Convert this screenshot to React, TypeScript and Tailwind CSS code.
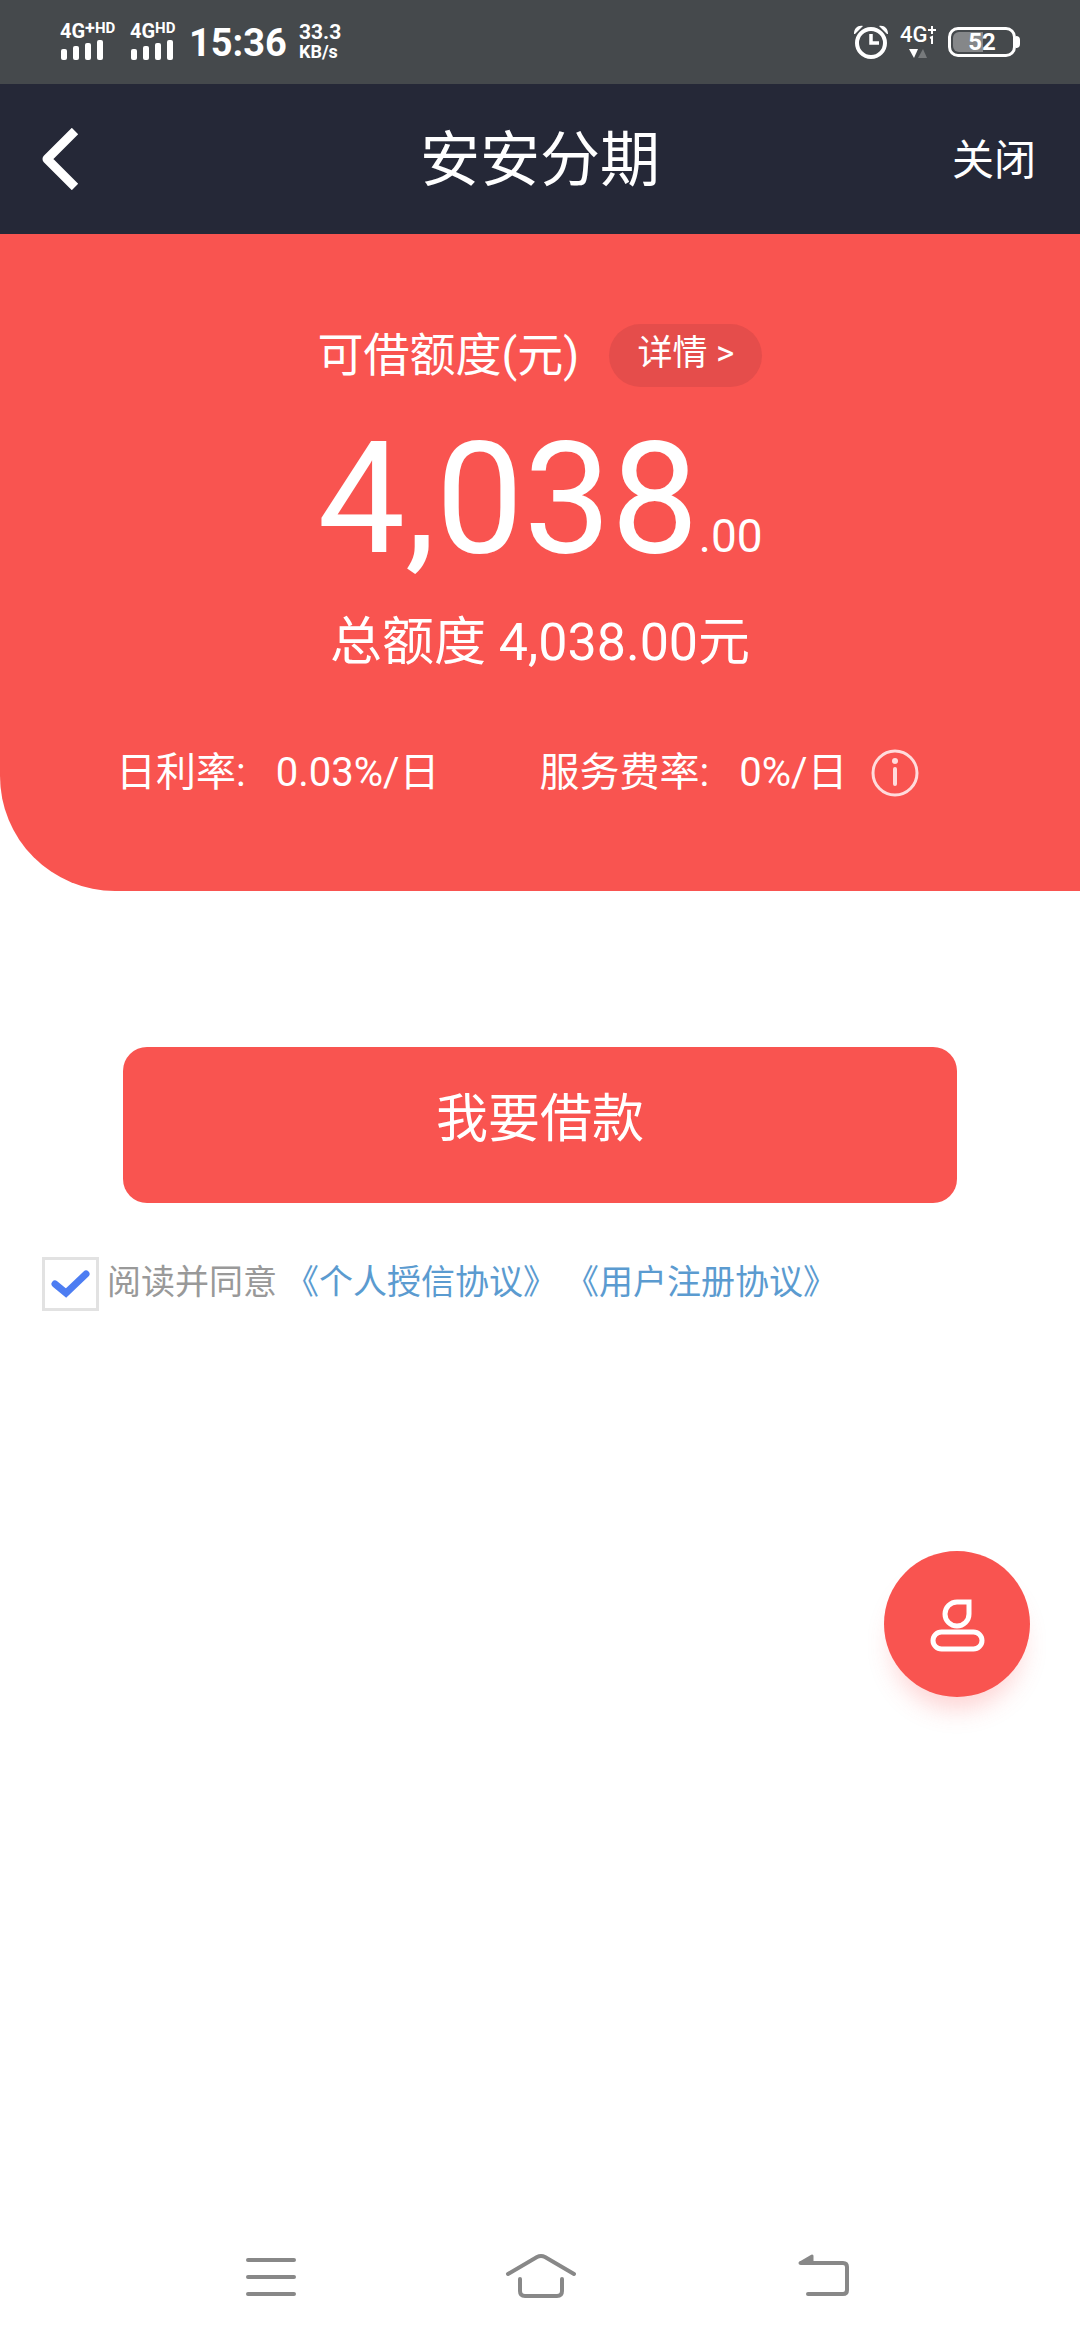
import { useState } from 'react';

interface SignalProps {
  network: string;
  plus?: boolean;
}

interface RateProps {
  label: string;
  value: string;
}

const AGREEMENTS = ['《个人授信协议》', '《用户注册协议》'];

function Signal({ network, plus }: SignalProps) {
  return (
    <div className="flex flex-col">
      <div className="flex items-start font-bold">
        <span className="text-[20px] leading-[18px]">{network}</span>
        {plus && <span className="text-[18px] leading-[12px]">+</span>}
        <span className="text-[15px] leading-[12px]">HD</span>
      </div>
      <svg className="w-11 h-5" viewBox="0 0 44 20" fill="currentColor">
        <rect x="1" y="9" width="6" height="11" rx="2" />
        <rect x="13" y="6" width="6" height="14" rx="2" />
        <rect x="25" y="3" width="6" height="17" rx="2" />
        <rect x="37" y="0" width="6" height="20" rx="2" />
      </svg>
    </div>
  );
}

function AlarmIcon() {
  return (
    <svg className="w-[34px] h-[34px]" viewBox="0 0 34 34" fill="none" stroke="currentColor">
      <circle cx="17" cy="18" r="14" strokeWidth="4" />
      <path d="M17 9v9h8" strokeWidth="3.5" />
      <path d="M0 9C0 3 4 0 9 1L1 9zM34 9c0-6-4-9-9-8l8 8z" fill="currentColor" stroke="none" />
    </svg>
  );
}

function StatusBar() {
  return (
    <header className="flex items-start justify-between h-[84px] pt-[22px] px-[60px] bg-[#45494c] text-white">
      <div className="flex items-start">
        <div className="w-[70px]">
          <Signal network="4G" plus />
        </div>
        <div className="w-[59px]">
          <Signal network="4G" />
        </div>
        <span className="w-[110px] text-[38px] leading-[42px] font-bold">15:36</span>
        <div className="flex flex-col font-bold">
          <span className="text-[21px] leading-[20px]">33.3</span>
          <span className="text-[18px] leading-[20px]">KB/s</span>
        </div>
      </div>
      <div className="flex items-start gap-3 pt-[3px]">
        <AlarmIcon />
        <div className="flex flex-col w-9">
          <div className="flex items-start">
            <span className="text-[22px] leading-[20px] font-medium">4G</span>
            <svg className="w-2 h-5" viewBox="0 0 8 20" fill="none" stroke="currentColor" strokeWidth="2">
              <path d="M4 1v8M0 5h8M2 13l2-1v7" />
            </svg>
          </div>
          <svg className="w-9 h-[14px]" viewBox="0 0 36 14">
            <path d="M9 4h9l-4 9z" fill="#fff" />
            <path d="M18 13h9l-4-9z" fill="#777a7c" />
          </svg>
        </div>
        <div className="flex items-center pt-[2px]">
          <div className="relative w-[68px] h-[30px] border-3 border-white rounded-[10px]">
            <div className="absolute left-[2px] top-[2px] w-[30px] h-5 rounded-l-[6px] bg-[#858789]" />
            <span className="relative block text-center text-[24px] leading-6 font-bold">52</span>
          </div>
          <div className="w-1 h-3 rounded-r-full bg-white" />
        </div>
      </div>
    </header>
  );
}

function TitleBar() {
  return (
    <nav className="grid grid-cols-3 items-center h-[150px] px-[42px] bg-[#252837] text-white">
      <button aria-label="返回" className="justify-self-start">
        <svg className="w-[38px] h-[62px]" viewBox="0 0 38 62" fill="none" stroke="currentColor" strokeWidth="9" strokeLinejoin="round">
          <path d="M33 3L5 31l28 28" />
        </svg>
      </button>
      <h1 className="pt-1 text-center text-[60px] leading-[72px] whitespace-nowrap">安安分期</h1>
      <button className="justify-self-end pt-1 pr-[2px] text-[42px] leading-[50px]">关闭</button>
    </nav>
  );
}

function Rate({ label, value }: RateProps) {
  return (
    <div className="flex gap-[30px]">
      <span>{label}</span>
      <span>{value}</span>
    </div>
  );
}

function Hero() {
  return (
    <section className="flex flex-col items-center h-[657px] pt-[90px] rounded-bl-[115px] bg-[#f95450] text-white">
      <div className="flex items-center gap-[30px]">
        <span className="text-[46px] leading-[63px]">可借额度(元)</span>
        <button className="h-[63px] px-7 pb-1 rounded-full bg-[#e54d4b] text-[35px] leading-[60px]">详情 &gt;</button>
      </div>
      <p className="mt-[34px] flex items-baseline">
        <span className="text-[156px] leading-[156px]">4,038</span>
        <span className="text-[46px] leading-[60px]">.00</span>
      </p>
      <p className="mt-[26px] text-[52px] leading-[80px]">总额度 4,038.00元</p>
      <div className="flex items-center self-stretch mt-[60px] pl-[116px] text-[40px] leading-[60px]">
        <Rate label="日利率:" value="0.03%/日" />
        <div className="flex items-center gap-6 ml-[100px]">
          <Rate label="服务费率:" value="0%/日" />
          <button aria-label="费率说明">
            <svg className="w-[48px] h-[48px]" viewBox="0 0 48 48" fill="none" stroke="#ffdcdc" strokeWidth="3">
              <circle cx="24" cy="24" r="22" />
              <path d="M24 20v15" strokeWidth="4" strokeLinecap="round" />
              <circle cx="24" cy="12" r="3" fill="#ffdcdc" stroke="none" />
            </svg>
          </button>
        </div>
      </div>
    </section>
  );
}

function SystemNav() {
  return (
    <footer className="flex items-center justify-between h-[126px] mt-auto px-[230px] text-[#888]">
      <button aria-label="最近任务">
        <svg className="w-20 h-14" viewBox="0 0 80 56" fill="none" stroke="currentColor" strokeWidth="4" strokeLinecap="round">
          <path d="M18 11h46M18 28h46M18 45h46" />
        </svg>
      </button>
      <button aria-label="主屏幕">
        <svg className="w-20 h-14" viewBox="0 0 80 56" fill="none" stroke="currentColor" strokeWidth="4" strokeLinecap="round">
          <path d="M8 25L37 8q4-2 8 0l29 17M20 30v12q0 5 5 5h32q5 0 5-5V30" />
        </svg>
      </button>
      <button aria-label="返回上一页">
        <svg className="w-20 h-14" viewBox="0 0 80 56" fill="none" stroke="currentColor" strokeWidth="4" strokeLinecap="round">
          <path d="M31 14h42q4 0 4 4v23q0 4-4 4H38" />
          <path d="M30 14l12-7v7z" strokeWidth="3" fill="currentColor" strokeLinejoin="round" />
        </svg>
      </button>
    </footer>
  );
}

export default function App() {
  const [agreed, setAgreed] = useState(true);

  return (
    <div className="relative flex flex-col min-h-screen bg-white font-['Roboto','Noto_Sans_CJK_SC',sans-serif]">
      <StatusBar />
      <TitleBar />
      <Hero />
      <main>
        <div className="px-[123px] pt-[156px]">
          <button className="w-full h-[156px] pb-[10px] rounded-[24px] bg-[#f95450] text-white text-[52px]">我要借款</button>
        </div>
        <div className="flex items-center mt-[54px] pl-[42px] text-[34px] leading-[50px] text-[#999]">
          <label className="flex items-center">
            <span className="relative w-[57px] h-[54px] mr-2">
              <input
                type="checkbox"
                checked={agreed}
                onChange={(e) => setAgreed(e.target.checked)}
                className="block appearance-none w-full h-full border-3 border-[#e2e2e2] bg-white"
              />
              {agreed && (
                <svg className="absolute inset-0 w-full h-full pointer-events-none" viewBox="0 0 57 54" fill="none" stroke="#4d7df2" strokeWidth="7" strokeLinecap="round">
                  <path d="M13 27l11 9 20-19" />
                </svg>
              )}
            </span>
            <span className="pb-1">阅读并同意</span>
          </label>
          {AGREEMENTS.map((name) => (
            <a key={name} href="#" className="pb-1 ml-2 text-[#5b9bd0]">
              {name}
            </a>
          ))}
        </div>
      </main>
      <button
        aria-label="个人中心"
        className="absolute right-[50px] top-[1551px] flex items-center justify-center w-[146px] h-[146px] pt-1 rounded-full bg-[#f95450] shadow-[0_20px_24px_-8px_rgba(250,84,82,0.25)]"
      >
        <svg className="w-14 h-[54px]" viewBox="0 0 56 54" fill="none" stroke="#fff" strokeWidth="5">
          <path d="M40 3v12a12 12 0 1 1-12-12z" />
          <rect x="4" y="33" width="49" height="17" rx="8.5" />
        </svg>
      </button>
      <SystemNav />
    </div>
  );
}
